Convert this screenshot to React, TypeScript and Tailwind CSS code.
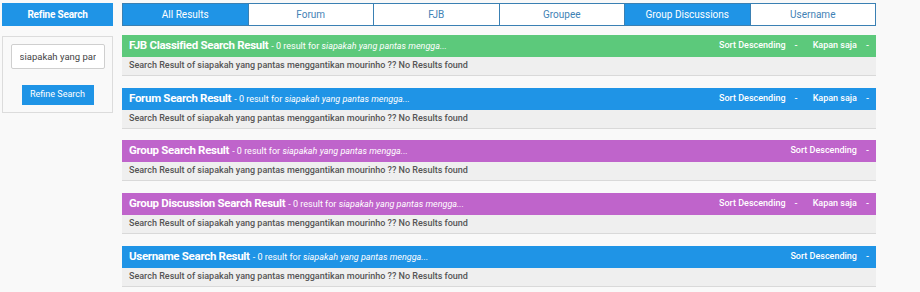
import clsx from 'clsx';

const tabs = [
  { label: 'All Results', active: true },
  { label: 'Forum', active: false },
  { label: 'FJB', active: false },
  { label: 'Groupee', active: false },
  { label: 'Group Discussions', active: true },
  { label: 'Username', active: false },
];

type Section = {
  title: string;
  color: string;
  period: boolean;
  gap: string;
};

const sections: Section[] = [
  { title: 'FJB Classified Search Result', color: 'bg-[#5cc97b]', period: true, gap: 'mt-0' },
  { title: 'Forum Search Result', color: 'bg-[#1f94e6]', period: true, gap: 'mt-[12px]' },
  { title: 'Group Search Result', color: 'bg-[#bf64cb]', period: false, gap: 'mt-[11px]' },
  { title: 'Group Discussion Search Result', color: 'bg-[#bf64cb]', period: true, gap: 'mt-[12px]' },
  { title: 'Username Search Result', color: 'bg-[#1f94e6]', period: false, gap: 'mt-[12px]' },
];

const Dropdown = ({ label }: { label: string }) => (
  <span className="flex items-center">
    <span>{label}</span>
    <span className="ml-[9px] mr-[7px] text-[9px]">-</span>
  </span>
);

export default function App() {
  return (
    <div
      className="flex h-[292px] w-[920px] gap-[9px] bg-[#f9f9f9] pl-[2px] pt-[3px]"
      style={{ fontFamily: 'Roboto, "Liberation Sans", sans-serif' }}
    >
      <aside className="w-[111px] shrink-0">
        <div className="flex h-[23px] items-center justify-center bg-[#1f94e6] text-[10px] font-bold tracking-[-0.2px] text-white">
          Refine Search
        </div>
        <div className="mt-[10px] flex h-[77px] flex-col items-center border border-[#dcdcdc] pt-[7px]">
          <input
            readOnly
            value="siapakah yang par"
            className="h-[25px] w-[94px] rounded-[2px] border border-[#cfcfcf] bg-white px-[8px] text-[9.5px] text-[#444] outline-none"
          />
          <button className="mt-[16px] h-[20px] w-[72px] bg-[#1f94e6] text-[9px] text-white">
            Refine Search
          </button>
        </div>
      </aside>

      <main className="w-[754px] shrink-0">
        <div className="flex h-[23px] border border-[#3a80b3]">
          {tabs.map((t, i) => (
            <div
              key={t.label}
              className={clsx(
                'flex flex-1 items-center justify-center text-[10px]',
                i > 0 && 'border-l border-[#3a80b3]',
                t.active ? 'bg-[#1f94e6] text-white' : 'bg-white text-[#3f82b5]'
              )}
            >
              {t.label}
            </div>
          ))}
        </div>

        <div className="mt-[9px] flex flex-col">
          {sections.map((s) => (
            <div key={s.title} className={s.gap}>
              <div
                className={clsx(
                  'flex h-[22px] items-center justify-between pl-[7px] text-white',
                  s.color
                )}
              >
                <div className="flex items-baseline whitespace-nowrap">
                  <span className="text-[11.5px] font-bold tracking-[-0.3px]">{s.title}</span>
                  <span className="ml-[3px] text-[9px]">
                    - 0 result for <i>siapakah yang pantas mengga...</i>
                  </span>
                </div>
                <div className="flex items-center text-[9px] font-medium">
                  <Dropdown label="Sort Descending" />
                  {s.period && (
                    <span className="ml-[8px]">
                      <Dropdown label="Kapan saja" />
                    </span>
                  )}
                </div>
              </div>
              <div className="flex h-[19px] items-center border-b border-[#d9d9d9] bg-[#efefef] pl-[7px] text-[9px] font-medium text-[#555]">
                Search Result of siapakah yang pantas menggantikan mourinho ?? No Results found
              </div>
            </div>
          ))}
        </div>
      </main>
    </div>
  );
}
